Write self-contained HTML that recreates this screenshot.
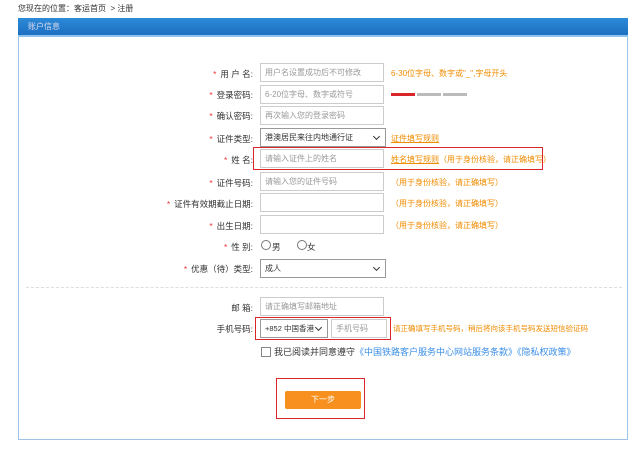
<!DOCTYPE html>
<html><head><meta charset="utf-8"><style>
body{margin:0;width:640px;height:451px;background:#fff;font-family:"Liberation Sans","Noto Sans CJK SC",sans-serif;font-size:9px;color:#333;position:relative;overflow:hidden}
.a{position:absolute;white-space:nowrap}
.lab{position:absolute;right:387px;text-align:right;font-size:8.5px;color:#333;white-space:nowrap}
.lab b{color:#e33;font-weight:normal;margin-right:4px}
.in{position:absolute;left:260px;width:124px;height:19px;border:1px solid #ccc;box-sizing:border-box;font-size:8px;color:#999;line-height:17px;padding-left:4px;background:#fff}
.sel{border-color:#999;color:#333}
.sel:after{content:"";position:absolute;right:6px;top:5px;width:4px;height:4px;border-right:1.3px solid #333;border-bottom:1.3px solid #333;transform:rotate(45deg)}
.hint{position:absolute;left:391px;color:#f08c00;font-size:8px;white-space:nowrap}
.red{position:absolute;border:1px solid #d9262a;box-sizing:border-box}
</style></head><body>
<div class="a" style="left:18px;top:3px;font-size:8px;color:#333">您现在的位置：客运首页 &nbsp;&gt; 注册</div>
<div class="a" style="left:18px;top:18px;width:610px;height:422px;border:1px solid #9fc3e6;box-sizing:border-box"></div>
<div class="a" style="left:18px;top:18px;width:610px;height:19px;background:linear-gradient(#2c8ad8,#1e6fc0);border-bottom:2px solid #8ec3ee;box-sizing:border-box;color:#dde;font-size:8px;line-height:17px;padding-left:10px">账户信息</div>

<div class="lab" style="top:68px"><b>*</b>用 户 名:</div>
<div class="in" style="top:63px">用户名设置成功后不可修改</div>
<div class="hint" style="top:68px">6-30位字母、数字或"_",字母开头</div>

<div class="lab" style="top:89px"><b>*</b>登录密码:</div>
<div class="in" style="top:85px">6-20位字母、数字或符号</div>
<div class="a" style="left:391px;top:93px;width:24px;height:3px;background:#d9262a"></div>
<div class="a" style="left:417px;top:93px;width:24px;height:3px;background:#bbb"></div>
<div class="a" style="left:443px;top:93px;width:24px;height:3px;background:#bbb"></div>

<div class="lab" style="top:110px"><b>*</b>确认密码:</div>
<div class="in" style="top:106px">再次输入您的登录密码</div>

<div class="lab" style="top:133px"><b>*</b>证件类型:</div>
<div class="in sel" style="top:128px;width:126px">港澳居民来往内地通行证</div>
<div class="hint" style="top:133px;text-decoration:underline">证件填写规则</div>

<div class="lab" style="top:154px"><b>*</b>姓 名:</div>
<div class="in" style="top:149px">请输入证件上的姓名</div>
<div class="hint" style="top:154px"><u>姓名填写规则</u>（用于身份核验，请正确填写）</div>
<div class="red" style="left:253px;top:147px;width:290px;height:23px"></div>

<div class="lab" style="top:177px"><b>*</b>证件号码:</div>
<div class="in" style="top:172px">请输入您的证件号码</div>
<div class="hint" style="top:177px">（用于身份核验，请正确填写）</div>

<div class="lab" style="top:198px"><b>*</b>证件有效期截止日期:</div>
<div class="in" style="top:193px"></div>
<div class="hint" style="top:198px">（用于身份核验，请正确填写）</div>

<div class="lab" style="top:220px"><b>*</b>出生日期:</div>
<div class="in" style="top:215px"></div>
<div class="hint" style="top:220px">（用于身份核验，请正确填写）</div>

<div class="lab" style="top:241px"><b>*</b>性 别:</div>
<div class="a" style="left:261px;top:240px;width:8px;height:8px;border:1px solid #777;border-radius:50%"></div>
<div class="a" style="left:272px;top:241px;font-size:8.5px">男</div>
<div class="a" style="left:297px;top:240px;width:8px;height:8px;border:1px solid #777;border-radius:50%"></div>
<div class="a" style="left:307px;top:241px;font-size:8.5px">女</div>

<div class="lab" style="top:263px"><b>*</b>优惠（待）类型:</div>
<div class="in sel" style="top:259px;width:126px">成人</div>

<div class="a" style="left:26px;top:287px;width:596px;border-top:1px dashed #ddd"></div>

<div class="lab" style="top:302px">邮 箱:</div>
<div class="in" style="top:297px">请正确填写邮箱地址</div>

<div class="lab" style="top:323px">手机号码:</div>
<div class="in sel" style="top:319px;width:68px;color:#333;font-size:7.5px">+852 中国香港</div>
<div class="in" style="top:319px;left:331px;width:56px">手机号码</div>
<div class="red" style="left:255px;top:317px;width:136px;height:23px"></div>
<div class="hint" style="top:323px;left:393px;font-size:7.5px">请正确填写手机号码，稍后将向该手机号码发送短信验证码</div>

<div class="a" style="left:261px;top:347px;width:8px;height:8px;border:1px solid #888"></div>
<div class="a" style="left:274px;top:345px;font-size:9px;color:#333">我已阅读并同意遵守<span style="color:#3a8ee6">《中国铁路客户服务中心网站服务条款》《隐私权政策》</span></div>

<div class="red" style="left:276px;top:378px;width:89px;height:41px"></div>
<div class="a" style="left:285px;top:391px;width:76px;height:18px;background:#f7901e;border-radius:2px;color:#fff;font-size:8px;text-align:center;line-height:18px">下一步</div>
</body></html>
